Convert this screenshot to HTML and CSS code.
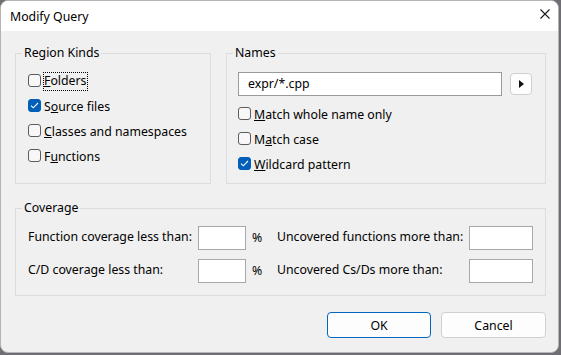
FILE: index.html
```html
<!DOCTYPE html>
<html>
<head>
<meta charset="utf-8">
<link rel="stylesheet" href="styles.css">
</head>
<body>
<div class="window">
  <div class="titlebar">
    <span class="title">Modify Query</span>
    <svg class="close" width="10" height="10" viewBox="0 0 10 10"><path d="M0.5 0.5L9.5 9.5M9.5 0.5L0.5 9.5" stroke="#1a1a1a" stroke-width="1.1" fill="none"/></svg>
  </div>
  <div class="content">
    <div class="top-row">
      <fieldset class="group kinds">
        <legend>Region Kinds</legend>
        <div class="checks">
          <label class="check"><span class="box"></span><span class="lbl focus"><u>F</u>olders</span></label>
          <label class="check"><span class="box on"><svg width="9" height="7" viewBox="0 0 9 7"><path d="M1 3.6L3.3 5.8L8 1" stroke="#fff" stroke-width="1.1" fill="none"/></svg></span><span class="lbl">S<u>o</u>urce files</span></label>
          <label class="check"><span class="box"></span><span class="lbl"><u>C</u>lasses and namespaces</span></label>
          <label class="check"><span class="box"></span><span class="lbl">F<u>u</u>nctions</span></label>
        </div>
      </fieldset>
      <fieldset class="group names">
        <legend>Names</legend>
        <div class="name-row">
          <div class="textbox">expr/*.cpp</div>
          <button class="arrow-btn"><svg width="5" height="8" viewBox="0 0 5 8"><path d="M0 0L5 4L0 8Z" fill="#111"/></svg></button>
        </div>
        <div class="checks names-checks">
          <label class="check"><span class="box"></span><span class="lbl"><u>M</u>atch whole name only</span></label>
          <label class="check"><span class="box"></span><span class="lbl">M<u>a</u>tch case</span></label>
          <label class="check"><span class="box on"><svg width="9" height="7" viewBox="0 0 9 7"><path d="M1 3.6L3.3 5.8L8 1" stroke="#fff" stroke-width="1.1" fill="none"/></svg></span><span class="lbl"><u>W</u>ildcard pattern</span></label>
        </div>
      </fieldset>
    </div>
    <fieldset class="group coverage">
      <legend>Coverage</legend>
      <div class="cov-grid">
        <span class="cov-lbl">Function coverage less than:</span>
        <div class="numbox small"></div>
        <span class="pct">%</span>
        <span class="cov-lbl">Uncovered functions more than:</span>
        <div class="numbox wide"></div>
        <span class="cov-lbl">C/D coverage less than:</span>
        <div class="numbox small"></div>
        <span class="pct">%</span>
        <span class="cov-lbl">Uncovered Cs/Ds more than:</span>
        <div class="numbox wide"></div>
      </div>
    </fieldset>
    <div class="buttons">
      <button class="btn default">OK</button>
      <button class="btn cancel">Cancel</button>
    </div>
  </div>
</div>
</body>
</html>
```
FILE: styles.css
```css
html, body {
  margin: 0;
  padding: 0;
}
body {
  width: 561px;
  height: 355px;
  background: #6e6e74;
  font-family: "Noto Sans", "Open Sans", sans-serif;
  font-size: 12.3px;
  color: #000;
  overflow: hidden;
}
.window {
  box-sizing: border-box;
  width: 559px;
  height: 353px;
  border: 1px solid #b4b4b4;
  border-radius: 8px;
  background: #f0f0f0;
  overflow: hidden;
}
.titlebar {
  height: 30px;
  background: #fff;
  display: flex;
  align-items: center;
  justify-content: space-between;
  padding: 0 8px 0 9px;
}
.title {
  font-size: 12.3px;
  line-height: 16px;
  margin-top: 1px;
  color: #000;
}
.close {
  display: block;
  margin-top: -4px;
}
.content {
  padding: 14px 0 0 14px;
}
.top-row {
  display: flex;
  gap: 15px;
  height: 139px;
}
.group {
  box-sizing: border-box;
  margin: 0;
  padding: 0;
  border: 1px solid #dcdcdc;
  min-width: 0;
}
.group legend {
  margin-left: 6px;
  padding: 0 2px;
  line-height: 16px;
  font-size: 12.3px;
}
.kinds {
  width: 196px;
}
.names {
  width: 320px;
}
.checks {
  display: flex;
  flex-direction: column;
  padding: 7px 0 0 12px;
}
.names-checks {
  padding: 5px 0 0 11px;
}
.check {
  display: flex;
  align-items: center;
  height: 25px;
}
.box {
  box-sizing: border-box;
  width: 13px;
  height: 13px;
  border: 1px solid #5c5c5c;
  border-radius: 3px;
  background: #f7f7f7;
  margin-right: 3px;
  display: flex;
  align-items: center;
  justify-content: center;
}
.box.on {
  background: #005fb8;
  border-color: #005fb8;
}
.box svg {
  display: block;
}
.lbl {
  line-height: 16px;
  margin-top: 2px;
}
.lbl.focus {
  outline: 1px dotted #000;
  outline-offset: 0;
  padding: 0 1px 1px 0;
}
.name-row {
  display: flex;
  align-items: center;
  padding: 11px 0 0 11px;
}
.textbox {
  box-sizing: border-box;
  width: 264px;
  height: 24px;
  border: 1px solid #9a9a9a;
  background: #fff;
  padding: 0 9px;
  line-height: 22px;
}
.arrow-btn {
  box-sizing: border-box;
  width: 22px;
  height: 22px;
  margin-left: 8px;
  border: 1px solid #cfcfcf;
  border-radius: 4px;
  background: #fdfdfd;
  display: flex;
  align-items: center;
  justify-content: center;
  padding: 0 0 0 1px;
}
.arrow-btn svg {
  display: block;
}
.coverage {
  margin-top: 16px;
  width: 531px;
  height: 96px;
}
.cov-grid {
  display: grid;
  grid-template-columns: 170px 48px 31px 192px 64px;
  grid-auto-rows: 24px;
  row-gap: 9px;
  align-items: center;
  padding: 10px 0 0 12px;
}
.cov-lbl {
  line-height: 16px;
  white-space: nowrap;
  margin-top: -2px;
}
.pct {
  padding-left: 6px;
  margin-top: -2px;
}
.numbox {
  box-sizing: border-box;
  height: 24px;
  border: 1px solid #a8a8a8;
  background: #fff;
}
.buttons {
  display: flex;
  justify-content: flex-end;
  gap: 10px;
  width: 531px;
  margin-top: 16px;
}
.btn {
  box-sizing: border-box;
  height: 26px;
  border-radius: 4px;
  background: #fdfdfd;
  border: 1px solid #d0d0d0;
  font-family: inherit;
  font-size: 12.3px;
  color: #000;
  padding: 0;
}
.btn.default {
  width: 104px;
  border: 1px solid #0067c0;
}
.btn.cancel {
  width: 105px;
}
```
